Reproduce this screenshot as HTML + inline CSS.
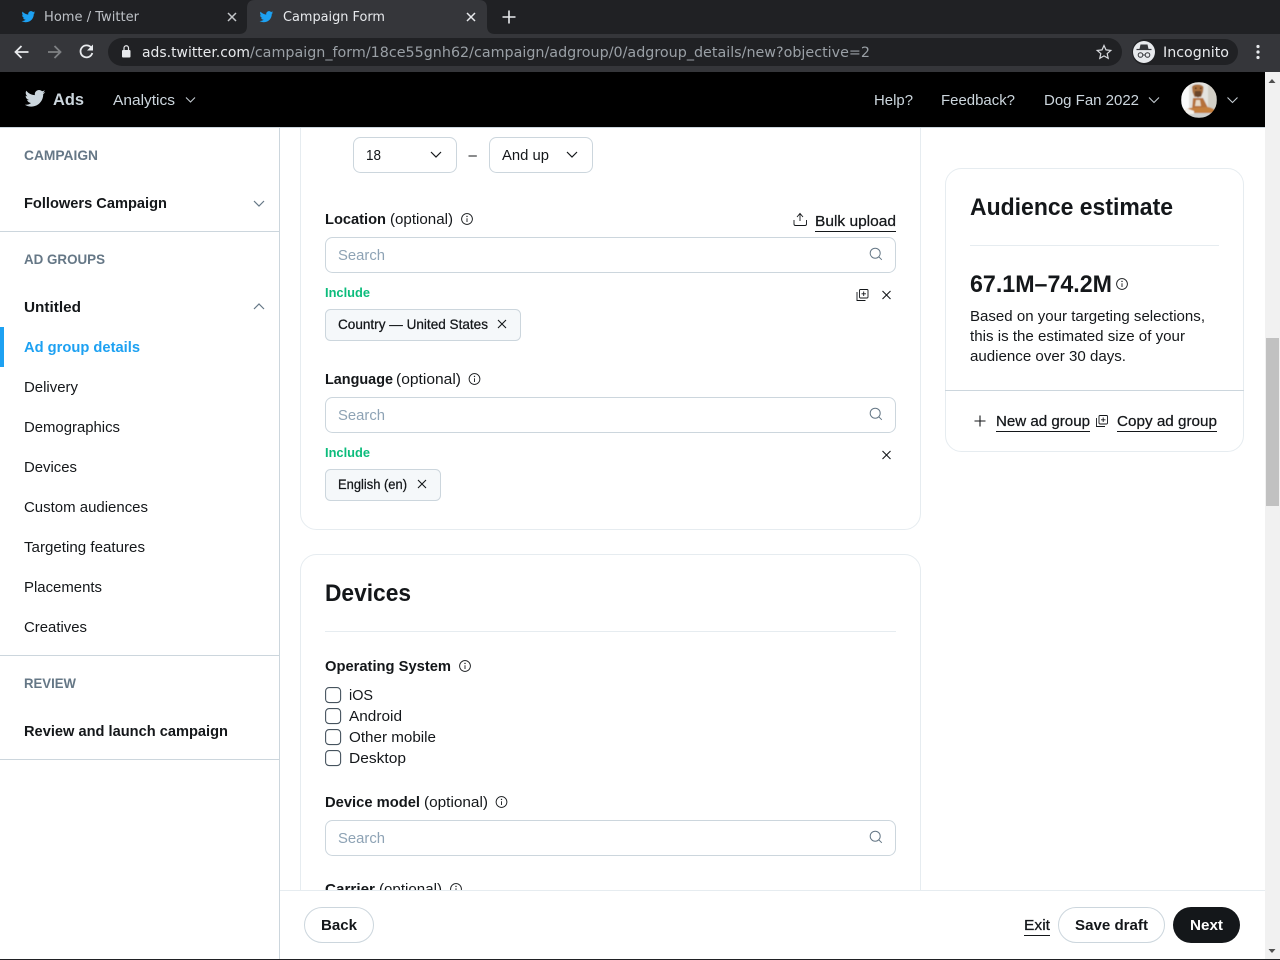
<!DOCTYPE html>
<html lang="en">
<head>
<meta charset="utf-8">
<title>Campaign Form</title>
<style>
html,body{margin:0;padding:0;width:1280px;height:960px;overflow:hidden;background:#fff}
svg{display:block}
text{font-family:"Liberation Sans",sans-serif;font-size:15px;fill:#14171a;white-space:pre}
.dv{font-family:"DejaVu Sans",sans-serif}
.b{font-weight:700}
.g{fill:#657786;font-weight:700;font-size:14px}
.s{fill:#8ea3b5}
.box{fill:#fff;stroke:#ccd6dd}
.chev{fill:none;stroke:#14171a;stroke-width:1.2}
.hchev{fill:none;stroke:#c4ccd2;stroke-width:1.1}
.m{stroke:#14171a;stroke-width:.25}
</style>
</head>
<body>
<svg width="1280" height="960" viewBox="0 0 1280 960" xmlns="http://www.w3.org/2000/svg">
<defs>
<path id="bird" d="M23.643 4.937c-.835.37-1.732.62-2.675.727.962-.576 1.7-1.49 2.048-2.578-.9.534-1.897.922-2.958 1.13-.85-.904-2.06-1.47-3.4-1.47-2.572 0-4.658 2.086-4.658 4.66 0 .364.042.718.12 1.06-3.873-.195-7.304-2.05-9.602-4.868-.4.69-.63 1.49-.63 2.342 0 1.616.823 3.043 2.072 3.878-.764-.025-1.482-.234-2.11-.583v.06c0 2.257 1.605 4.14 3.737 4.568-.392.106-.803.162-1.227.162-.3 0-.593-.028-.877-.082.593 1.85 2.313 3.198 4.352 3.234-1.595 1.25-3.604 1.995-5.786 1.995-.376 0-.747-.022-1.112-.065 2.062 1.323 4.51 2.093 7.14 2.093 8.57 0 13.255-7.098 13.255-13.254 0-.2-.005-.402-.014-.602.91-.658 1.7-1.477 2.323-2.41z"/>
<g id="info" fill="none" stroke="#14171a"><circle cx="0" cy="0" r="5.4" stroke-width=".9"/><path d="M0-.8V3" stroke-width=".9"/><circle cx="0" cy="-2.6" r=".7" fill="#14171a" stroke="none"/></g>
<g id="x" fill="none" stroke="#14171a" stroke-width="1.100"><path d="M-4-4L4 4M4-4L-4 4"/></g>
<g id="mag" fill="none" stroke="#657786" stroke-width="1"><circle cx="-.8" cy="-.8" r="5"/><path d="M2.8 2.8L5.8 5.8"/></g>
<g id="copy" fill="none" stroke="#14171a" stroke-width=".9"><rect x="-3" y="-5.5" width="8.5" height="8.5" rx="1"/><path d="M-5.5-3V5.5H3M1.2-3.5V1M-1 -1.2H3.5"/></g>
<clipPath id="av"><circle cx="1199" cy="100" r="18"/></clipPath>
<clipPath id="mainclip"><rect x="280" y="128" width="985" height="762"/></clipPath>
<filter id="soft" x="0" y="0" width="100%" height="100%"><feGaussianBlur stdDeviation=".6"/></filter>
</defs>

<!-- browser chrome -->
<rect x="0" y="0" width="1280" height="72" fill="#202124"/>
<rect x="0" y="34" width="1280" height="38" fill="#35363a"/>
<path d="M239 34q8 0 8-8V8q0-8 8-8H479q8 0 8 8V26q0 8 8 8z" fill="#35363a"/>
<use href="#bird" transform="translate(21,9.500) scale(.6)" fill="#1da1f2"/>
<text class="dv" x="44" y="21" style="font-size:13px;fill:#bdc1c6" textLength="95" lengthAdjust="spacingAndGlyphs">Home / Twitter</text>
<path d="M228 13l8 8M236 13l-8 8" stroke="#c4c7ca" stroke-width="1.500"/>
<use href="#bird" transform="translate(259,9.500) scale(.6)" fill="#1da1f2"/>
<text class="dv" x="283" y="21" style="font-size:13px;fill:#e8eaed" textLength="102" lengthAdjust="spacingAndGlyphs">Campaign Form</text>
<path d="M467 13l8 8M475 13l-8 8" stroke="#e8eaed" stroke-width="1.500"/>
<path d="M509 10.500v13M502.500 17h13" stroke="#e8eaed" stroke-width="1.600"/>
<path d="M28.500 52H16M21.500 46l-6 6 6 6" fill="none" stroke="#e8eaed" stroke-width="1.800"/>
<path d="M48 52H60.500M54.500 46l6 6-6 6" fill="none" stroke="#7f8184" stroke-width="1.800"/>
<path d="M91.500 48a6 6 0 1 0 .8 5" fill="none" stroke="#e8eaed" stroke-width="1.800"/><path d="M93 44.500v6h-6z" fill="#e8eaed"/>
<rect x="108" y="38" width="1014" height="28" rx="14" fill="#202124"/>
<rect x="122" y="50" width="8.500" height="7.500" rx="1" fill="#e8eaed"/><path d="M124 50v-2a2.200 2.200 0 0 1 4.500 0v2" fill="none" stroke="#e8eaed" stroke-width="1.200"/>
<text class="dv" x="142" y="57" style="font-size:14px;fill:#e8eaed" textLength="108" lengthAdjust="spacingAndGlyphs">ads.twitter.com</text>
<text class="dv" x="250" y="57" style="font-size:14px;fill:#9aa0a6" textLength="620" lengthAdjust="spacingAndGlyphs">/campaign_form/18ce55gnh62/campaign/adgroup/0/adgroup_details/new?objective=2</text>
<path d="M1104 45.500l2 4.400 4.800.5-3.600 3.200 1 4.700-4.200-2.400-4.200 2.400 1-4.700-3.600-3.200 4.800-.5z" fill="none" stroke="#d8dade" stroke-width="1.200"/>
<rect x="1132" y="39" width="106" height="26" rx="13" fill="#202124"/>
<circle cx="1144" cy="52" r="11" fill="#e8eaed"/>
<path d="M1136.500 49.500h15" stroke="#35363a" stroke-width="1.200"/><path d="M1139.500 49l1-4.500h7l1 4.500z" fill="#35363a"/>
<circle cx="1140.500" cy="55" r="2.300" fill="none" stroke="#35363a" stroke-width="1"/><circle cx="1147.500" cy="55" r="2.300" fill="none" stroke="#35363a" stroke-width="1"/><path d="M1143 55h2" stroke="#35363a"/>
<text class="dv" x="1163" y="57" style="font-size:14px;fill:#e8eaed" textLength="66" lengthAdjust="spacingAndGlyphs">Incognito</text>
<circle cx="1258" cy="46.500" r="1.600" fill="#e8eaed"/><circle cx="1258" cy="52" r="1.600" fill="#e8eaed"/><circle cx="1258" cy="57.500" r="1.600" fill="#e8eaed"/>

<!-- page background -->
<rect x="0" y="72" width="1265" height="888" fill="#fff"/>

<!-- main cards -->
<g clip-path="url(#mainclip)">
<rect x="300.500" y="100" width="620" height="429.500" rx="16" fill="#fff" stroke="#e6ecf0"/>
<rect x="300.500" y="554.500" width="620" height="400" rx="16" fill="#fff" stroke="#e6ecf0"/>

<rect class="box" x="353.500" y="137.500" width="103" height="35" rx="7"/>
<text x="366" y="160" textLength="15" lengthAdjust="spacingAndGlyphs">18</text>
<path class="chev" d="M431 152l5 5 5-5"/>
<text x="468.500" y="160">–</text>
<rect class="box" x="489.500" y="137.500" width="103" height="35" rx="7"/>
<text x="502" y="160" textLength="47" lengthAdjust="spacingAndGlyphs">And up</text>
<path class="chev" d="M567 152l5 5 5-5"/>

<text class="b" x="325" y="224" textLength="61" lengthAdjust="spacingAndGlyphs">Location</text>
<text x="390" y="224" textLength="63" lengthAdjust="spacingAndGlyphs">(optional)</text>
<use href="#info" x="467" y="219"/>
<path d="M794 220v4q0 1.500 1.500 1.500h9.500q1.500 0 1.500-1.500v-4M800 221v-7M797 217l3-3.500 3 3.500" fill="none" stroke="#14171a" stroke-width=".9"/>
<text class="m" x="815" y="226" textLength="81" lengthAdjust="spacingAndGlyphs">Bulk upload</text>
<rect x="815" y="231" width="81" height="1" fill="#14171a"/>
<rect class="box" x="325.500" y="237.500" width="570" height="35" rx="7"/>
<text class="s" x="338" y="260" textLength="47" lengthAdjust="spacingAndGlyphs">Search</text>
<use href="#mag" x="876" y="254"/>
<text x="325" y="297" style="font-size:13px;font-weight:700;fill:#0cbc7c" textLength="45" lengthAdjust="spacingAndGlyphs">Include</text>
<use href="#copy" x="862.500" y="295"/>
<use href="#x" x="886.500" y="295"/>
<rect x="325.500" y="309.500" width="195" height="31" rx="5" fill="#f5f8fa" stroke="#ccd6dd"/>
<text class="m" x="338" y="329" style="font-size:14px" textLength="150" lengthAdjust="spacingAndGlyphs">Country — United States</text>
<use href="#x" x="502" y="324"/>

<text class="b" x="325" y="384" textLength="68" lengthAdjust="spacingAndGlyphs">Language</text>
<text x="396" y="384" textLength="65" lengthAdjust="spacingAndGlyphs">(optional)</text>
<use href="#info" x="474.500" y="379"/>
<rect class="box" x="325.500" y="397.500" width="570" height="35" rx="7"/>
<text class="s" x="338" y="420" textLength="47" lengthAdjust="spacingAndGlyphs">Search</text>
<use href="#mag" x="876" y="414"/>
<text x="325" y="457" style="font-size:13px;font-weight:700;fill:#0cbc7c" textLength="45" lengthAdjust="spacingAndGlyphs">Include</text>
<use href="#x" x="886.500" y="455"/>
<rect x="325.500" y="469.500" width="115" height="31" rx="5" fill="#f5f8fa" stroke="#ccd6dd"/>
<text class="m" x="338" y="489" style="font-size:14px" textLength="69" lengthAdjust="spacingAndGlyphs">English (en)</text>
<use href="#x" x="422" y="484"/>

<text class="b" x="325" y="601" style="font-size:24px" textLength="86" lengthAdjust="spacingAndGlyphs">Devices</text>
<rect x="325" y="631" width="571" height="1" fill="#e6ecf0"/>
<text class="b" x="325" y="671" textLength="126" lengthAdjust="spacingAndGlyphs">Operating System</text>
<use href="#info" x="465" y="666"/>
<g fill="#fff" stroke="#46535e" stroke-width="1.100">
<rect x="325.600" y="687.600" width="15" height="15" rx="3.500"/>
<rect x="325.600" y="708.600" width="15" height="15" rx="3.500"/>
<rect x="325.600" y="729.600" width="15" height="15" rx="3.500"/>
<rect x="325.600" y="750.600" width="15" height="15" rx="3.500"/>
</g>
<text x="349" y="700" textLength="24" lengthAdjust="spacingAndGlyphs">iOS</text>
<text x="349" y="721" textLength="53" lengthAdjust="spacingAndGlyphs">Android</text>
<text x="349" y="742" textLength="87" lengthAdjust="spacingAndGlyphs">Other mobile</text>
<text x="349" y="763" textLength="57" lengthAdjust="spacingAndGlyphs">Desktop</text>
<text class="b" x="325" y="807" textLength="95" lengthAdjust="spacingAndGlyphs">Device model</text>
<text x="424" y="807" textLength="64" lengthAdjust="spacingAndGlyphs">(optional)</text>
<use href="#info" x="501.500" y="802"/>
<rect class="box" x="325.500" y="820.500" width="570" height="35" rx="7"/>
<text class="s" x="338" y="843" textLength="47" lengthAdjust="spacingAndGlyphs">Search</text>
<use href="#mag" x="876" y="837"/>
<text class="b" x="325" y="894" textLength="50" lengthAdjust="spacingAndGlyphs">Carrier</text>
<text x="379" y="894" textLength="63" lengthAdjust="spacingAndGlyphs">(optional)</text>
<use href="#info" x="456" y="889"/>

<!-- audience card -->
<rect x="945.500" y="168.500" width="298" height="283" rx="16" fill="#fff" stroke="#e6ecf0"/>
<text class="b" x="970" y="215" style="font-size:24px" textLength="203" lengthAdjust="spacingAndGlyphs">Audience estimate</text>
<rect x="970" y="245" width="249" height="1" fill="#e6ecf0"/>
<text class="b" x="970" y="292" style="font-size:24px" textLength="142" lengthAdjust="spacingAndGlyphs">67.1M–74.2M</text>
<use href="#info" x="1122" y="284"/>
<text x="970" y="321" textLength="235" lengthAdjust="spacingAndGlyphs">Based on your targeting selections,</text>
<text x="970" y="341" textLength="215" lengthAdjust="spacingAndGlyphs">this is the estimated size of your</text>
<text x="970" y="361" textLength="156" lengthAdjust="spacingAndGlyphs">audience over 30 days.</text>
<rect x="945" y="390" width="299" height="1" fill="#ccd6dd"/>
<path d="M980 415.500v11M974.500 421h11" stroke="#14171a" stroke-width="1.100"/>
<text class="m" x="996" y="426" textLength="94" lengthAdjust="spacingAndGlyphs">New ad group</text>
<rect x="996" y="431" width="94" height="1" fill="#14171a"/>
<use href="#copy" x="1102" y="421"/>
<text class="m" x="1117" y="426" textLength="100" lengthAdjust="spacingAndGlyphs">Copy ad group</text>
<rect x="1117" y="431" width="100" height="1" fill="#14171a"/>
</g>

<!-- header -->
<rect x="0" y="72" width="1265" height="55" fill="#000"/>
<rect x="0" y="127" width="1265" height="1" fill="#ccd6dd"/>
<use href="#bird" transform="translate(24,87.500) scale(.9)" fill="#ccd6dd"/>
<text class="b" x="53" y="105" style="font-size:17px;fill:#ccd6dd" textLength="31" lengthAdjust="spacingAndGlyphs">Ads</text>
<text x="113" y="105" style="fill:#ccd6dd" textLength="62" lengthAdjust="spacingAndGlyphs">Analytics</text>
<path class="hchev" d="M186 97.500l4.500 4.500 4.500-4.500"/>
<text x="874" y="105" style="fill:#ccd6dd" textLength="39" lengthAdjust="spacingAndGlyphs">Help?</text>
<text x="941" y="105" style="fill:#ccd6dd" textLength="74" lengthAdjust="spacingAndGlyphs">Feedback?</text>
<text x="1044" y="105" style="fill:#ccd6dd" textLength="95" lengthAdjust="spacingAndGlyphs">Dog Fan 2022</text>
<path class="hchev" d="M1149 97.500l5 5 5-5"/>
<g clip-path="url(#av)">
<g filter="url(#soft)">
<rect x="1181" y="82" width="36" height="36" fill="#e4e3df"/>
<rect x="1181" y="82" width="8" height="36" fill="#fafafa"/>
<rect x="1208" y="82" width="9" height="30" fill="#d2cfc6"/>
<path d="M1193 98h10l6 12h-17z" fill="#b5713a"/>
<path d="M1192 87q1-2.500 5.500-2.500t6 2.500l-.5 5-2 5h-6.500l-2-5z" fill="#a9703e"/>
<path d="M1195 91h6l.5 4.500-3.500 2-3.500-2z" fill="#6b452a"/>
<rect x="1195" y="87.500" width="1.500" height="1.500" fill="#3a2415"/><rect x="1200" y="87.500" width="1.500" height="1.500" fill="#3a2415"/>
<path d="M1196 100h4l1 6h-6z" fill="#e6d9c6"/>
<path d="M1184 111q5-4 10-3l14-1q5 1 8 4v2h-32z" fill="#c47f3d"/>
<rect x="1181" y="113" width="36" height="5" fill="#cfd0ce"/>
<path d="M1186 108l8 3v3h-10z" fill="#f3f1ec"/>
</g>
</g>
<path class="hchev" d="M1227.500 97.500l5 5 5-5"/>

<!-- sidebar -->
<rect x="279" y="128" width="1" height="832" fill="#ccd6dd"/>
<text class="g" x="24" y="160" textLength="74" lengthAdjust="spacingAndGlyphs">CAMPAIGN</text>
<text class="b" x="24" y="208" textLength="143" lengthAdjust="spacingAndGlyphs">Followers Campaign</text>
<path d="M254 201l5 5 5-5" fill="none" stroke="#657786" stroke-width="1.200"/>
<rect x="0" y="231" width="279" height="1" fill="#ccd6dd"/>
<text class="g" x="24" y="264" textLength="81" lengthAdjust="spacingAndGlyphs">AD GROUPS</text>
<text class="b" x="24" y="312" textLength="57" lengthAdjust="spacingAndGlyphs">Untitled</text>
<path d="M254 309l5-5 5 5" fill="none" stroke="#657786" stroke-width="1.200"/>
<rect x="0" y="327" width="4" height="40" fill="#1da1f2"/>
<text class="b" x="24" y="352" style="fill:#1da1f2" textLength="116" lengthAdjust="spacingAndGlyphs">Ad group details</text>
<text x="24" y="392" textLength="54" lengthAdjust="spacingAndGlyphs">Delivery</text>
<text x="24" y="432" textLength="96" lengthAdjust="spacingAndGlyphs">Demographics</text>
<text x="24" y="472" textLength="53" lengthAdjust="spacingAndGlyphs">Devices</text>
<text x="24" y="512" textLength="124" lengthAdjust="spacingAndGlyphs">Custom audiences</text>
<text x="24" y="552" textLength="121" lengthAdjust="spacingAndGlyphs">Targeting features</text>
<text x="24" y="592" textLength="78" lengthAdjust="spacingAndGlyphs">Placements</text>
<text x="24" y="632" textLength="63" lengthAdjust="spacingAndGlyphs">Creatives</text>
<rect x="0" y="655" width="279" height="1" fill="#ccd6dd"/>
<text class="g" x="24" y="688" textLength="52" lengthAdjust="spacingAndGlyphs">REVIEW</text>
<text class="b" x="24" y="736" textLength="204" lengthAdjust="spacingAndGlyphs">Review and launch campaign</text>
<rect x="0" y="759" width="279" height="1" fill="#ccd6dd"/>

<!-- footer -->
<rect x="280" y="890" width="985" height="69" fill="#fff"/>
<rect x="280" y="890" width="985" height="1" fill="#e6ecf0"/>
<rect x="304.500" y="907.500" width="69" height="35" rx="17.500" fill="#fff" stroke="#ccd6dd"/>
<text class="b" x="321" y="930" textLength="36" lengthAdjust="spacingAndGlyphs">Back</text>
<text class="m" x="1024" y="930" textLength="26" lengthAdjust="spacingAndGlyphs">Exit</text>
<rect x="1024" y="935" width="26" height="1" fill="#14171a"/>
<rect x="1058.500" y="907.500" width="106" height="35" rx="17.500" fill="#fff" stroke="#ccd6dd"/>
<text class="b" x="1075" y="930" textLength="73" lengthAdjust="spacingAndGlyphs">Save draft</text>
<rect x="1173" y="907" width="67" height="36" rx="18" fill="#14171a"/>
<text class="b" x="1190" y="930" style="fill:#fff" textLength="33" lengthAdjust="spacingAndGlyphs">Next</text>

<!-- scrollbar -->
<rect x="1265" y="72" width="15" height="887" fill="#f1f1f1"/>
<rect x="1266" y="338" width="13" height="168" fill="#c1c1c1"/>
<path d="M1268.500 83l3.500-4 3.500 4z" fill="#505050"/>
<path d="M1268.500 949l3.500 4 3.500-4z" fill="#505050"/>
<rect x="0" y="959" width="1280" height="1" fill="#202124"/>
</svg>
</body>
</html>
